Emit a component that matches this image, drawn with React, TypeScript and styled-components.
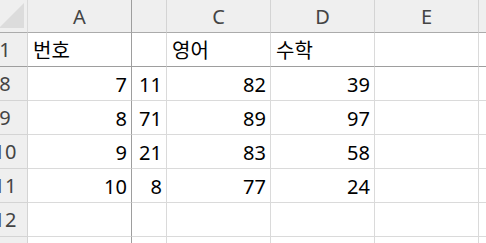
import React from 'react';
import styled, { createGlobalStyle } from 'styled-components';

const GlobalStyle = createGlobalStyle`
  html, body {
    margin: 0;
    padding: 0;
    background: #ffffff;
    overflow: hidden;
  }
`;

const columns = [
  { key: 'A', width: 104, frozen: true },
  { key: 'B', width: 35, label: '' },
  { key: 'C', width: 104 },
  { key: 'D', width: 104 },
  { key: 'E', width: 104 },
  { key: 'F', width: 104 }
];

type Cell = string | number | null;

const rows: { num: number; frozen?: boolean; cells: Cell[] }[] = [
  { num: 1, frozen: true, cells: ['번호', null, '영어', '수학', null, null] },
  { num: 8, cells: [7, 11, 82, 39, null, null] },
  { num: 9, cells: [8, 71, 89, 97, null, null] },
  { num: 10, cells: [9, 21, 83, 58, null, null] },
  { num: 11, cells: [10, 8, 77, 24, null, null] },
  { num: 12, cells: [null, null, null, null, null, null] },
  { num: 13, cells: [null, null, null, null, null, null] }
];

const App = () => {
  const template = `45px ${columns.map((c) => `${c.width}px`).join(' ')}`;
  return (
    <>
      <GlobalStyle />
      <Viewport>
        <Sheet style={{ gridTemplateColumns: template }}>
          <Corner>
            <svg width='25' height='25' viewBox='0 0 25 25'>
              <polygon points='25,0 25,25 0,25' fill='#dcdcdc' />
            </svg>
          </Corner>
          {columns.map((c) => (
            <ColHead key={c.key} $frozen={c.frozen}>
              {c.label ?? c.key}
            </ColHead>
          ))}
          {rows.map((r) => (
            <React.Fragment key={r.num}>
              <RowHead $frozen={r.frozen}>{r.num}</RowHead>
              {r.cells.map((v, i) => (
                <DataCell
                  key={i}
                  $frozenRow={r.frozen}
                  $frozenCol={columns[i].frozen}
                  $number={typeof v === 'number'}
                >
                  {v}
                </DataCell>
              ))}
            </React.Fragment>
          ))}
        </Sheet>
      </Viewport>
    </>
  );
};

export default App;

const Viewport = styled.div`
  width: 486px;
  height: 243px;
  overflow: hidden;
`;

const Sheet = styled.div`
  display: grid;
  grid-template-rows: 33px repeat(7, 34px);
  margin-left: -17px;
  width: max-content;
  font-family: 'Noto Sans', 'Noto Sans CJK KR', sans-serif;
  font-size: 20px;
  color: #000000;
`;

const BaseCell = styled.div`
  box-sizing: border-box;
  border-right: 1px solid #dadada;
  border-bottom: 1px solid #dadada;
  overflow: hidden;
  white-space: nowrap;
`;

const Corner = styled(BaseCell)`
  display: flex;
  justify-content: flex-end;
  align-items: flex-end;
  padding: 0 3px 4px 0;
  background: #efefef;
  border-bottom-color: #ababab;

  svg {
    display: block;
  }
`;

const ColHead = styled(BaseCell)<{ $frozen?: boolean }>`
  display: flex;
  align-items: center;
  justify-content: center;
  background: #efefef;
  color: #444444;
  border-bottom-color: #ababab;
  border-right-color: ${(p) => (p.$frozen ? '#9e9e9e' : '#d4d4d4')};
`;

const RowHead = styled(BaseCell)<{ $frozen?: boolean }>`
  display: flex;
  align-items: center;
  justify-content: center;
  background: #efefef;
  color: #444444;
  border-right-color: #d4d4d4;
  border-bottom-color: ${(p) => (p.$frozen ? '#9e9e9e' : '#d4d4d4')};
`;

const DataCell = styled(BaseCell)<{ $frozenRow?: boolean; $frozenCol?: boolean; $number?: boolean }>`
  display: flex;
  align-items: flex-end;
  justify-content: ${(p) => (p.$number ? 'flex-end' : 'flex-start')};
  padding: 0 4px 2px 5px;
  line-height: 27px;
  border-right-color: ${(p) => (p.$frozenCol ? '#9e9e9e' : '#dadada')};
  border-bottom-color: ${(p) => (p.$frozenRow ? '#9e9e9e' : '#dadada')};
`;
